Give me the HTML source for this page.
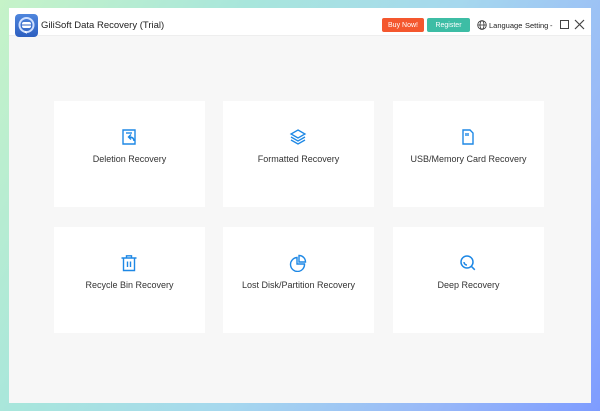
<!DOCTYPE html>
<html><head><style>
*{margin:0;padding:0;box-sizing:border-box}
body{width:600px;height:411px;overflow:hidden;position:relative;font-family:"Liberation Sans",sans-serif;
background:linear-gradient(120deg,#c6f3c8 0%,#a8e6dc 30%,#a6d8ee 55%,#98b8f8 80%,#7e9cff 100%)}
.win{position:absolute;left:9px;top:8px;width:582px;height:395px;background:#f7f7f7}
.tb{position:absolute;left:0;top:0;width:582px;height:28px;background:#fff;border-bottom:1px solid #eee}
.logo{position:absolute;left:6px;top:6px;width:23px;height:23px;border-radius:4px;background:linear-gradient(#4f86dd,#2d5fc0)}
.title{position:absolute;left:32px;top:12px;font-size:9.5px;color:#222}
.btn{position:absolute;top:10px;height:14px;border-radius:2px;color:#fff;font-size:7px;display:flex;align-items:center;justify-content:center}
.t{position:absolute;top:13px;font-size:7.5px;color:#222}
.card{position:absolute;width:151px;height:106px;background:#fff}
.card svg{position:absolute;left:66px;top:27px}
.lbl{position:absolute;left:0;right:0;top:53px;text-align:center;font-size:9px;color:#333}
</style></head><body>
<div class="win">
<div class="tb">
<div class="logo"><svg width="23" height="23" viewBox="0 0 23 23"><circle cx="11.5" cy="11" r="7" fill="none" stroke="#cfe0ff" stroke-width="2"/><rect x="7" y="8" width="9" height="6" rx="2" fill="#fff"/><line x1="7" y1="11" x2="16" y2="11" stroke="#2d5fc0"/><path d="M9 18 l3 2 -1-3z" fill="#fff"/></svg></div>
<div class="title">GiliSoft Data Recovery (Trial)</div>
<div class="btn" style="left:373px;width:42px;background:#f4572e">Buy Now!</div>
<div class="btn" style="left:418px;width:43px;background:#3dbda5">Register</div>
<svg style="position:absolute;left:468px;top:12px" width="10" height="10" viewBox="0 0 10 10"><circle cx="5" cy="5" r="4.3" fill="none" stroke="#333" stroke-width=".8"/><ellipse cx="5" cy="5" rx="2" ry="4.3" fill="none" stroke="#333" stroke-width=".8"/><line x1=".7" y1="5" x2="9.3" y2="5" stroke="#333" stroke-width=".8"/></svg>
<div class="t" style="left:480px">Language</div>
<div class="t" style="left:516px">Setting</div>
<div class="t" style="left:541px">-</div>
<div style="position:absolute;left:551px;top:12px;width:9px;height:9px;border:1px solid #444"></div>
<svg style="position:absolute;left:565px;top:11px" width="11" height="11"><path d="M1 1L10 10M10 1L1 10" stroke="#444" stroke-width="1.2"/></svg>
</div>
</div>
<div class="card" style="left:54px;top:101px"><svg width="18" height="18" viewBox="0 0 18 18" fill="none" stroke="#1e88e5" stroke-width="1.4"><path d="M3 2h12v14H3z"/><path d="M6 5h6"/><path d="M14 13c0-3-2-4-5-4M11 6.5L8.5 9 11 11.5"/></svg><div class="lbl">Deletion Recovery</div></div>
<div class="card" style="left:223px;top:101px"><svg width="18" height="18" viewBox="0 0 18 18" fill="none" stroke="#1e88e5" stroke-width="1.3"><path d="M9 2l7 4-7 4-7-4z"/><path d="M2 9l7 4 7-4"/><path d="M2 12l7 4 7-4"/></svg><div class="lbl">Formatted Recovery</div></div>
<div class="card" style="left:393px;top:101px"><svg width="18" height="18" viewBox="0 0 18 18" fill="none" stroke="#1e88e5" stroke-width="1.4"><path d="M4 2h7l3 3v11H4z"/><path d="M7 5v3M9 5v3"/></svg><div class="lbl">USB/Memory Card Recovery</div></div>
<div class="card" style="left:54px;top:227px"><svg width="18" height="18" viewBox="0 0 18 18" fill="none" stroke="#1e88e5" stroke-width="1.4"><path d="M1.5 4h15M6.5 4V1.8h5V4M3.5 4v12.5h11V4M7.5 7.5v5.5M10.5 7.5v5.5"/></svg><div class="lbl">Recycle Bin Recovery</div></div>
<div class="card" style="left:223px;top:227px"><svg width="18" height="18" viewBox="0 0 18 18" fill="none" stroke="#1e88e5" stroke-width="1.4"><path d="M8 3.5A7 7 0 1 0 15.5 10H8z"/><path d="M10 1.5a6.5 6.5 0 0 1 6.5 6.5H10z"/></svg><div class="lbl">Lost Disk/Partition Recovery</div></div>
<div class="card" style="left:393px;top:227px"><svg width="18" height="18" viewBox="0 0 18 18" fill="none" stroke="#1e88e5" stroke-width="1.5"><circle cx="8" cy="8" r="6"/><path d="M5 8a3 3 0 0 0 3 3"/><path d="M12.3 12.3l3.5 3.5"/></svg><div class="lbl">Deep Recovery</div></div>
</body></html>
